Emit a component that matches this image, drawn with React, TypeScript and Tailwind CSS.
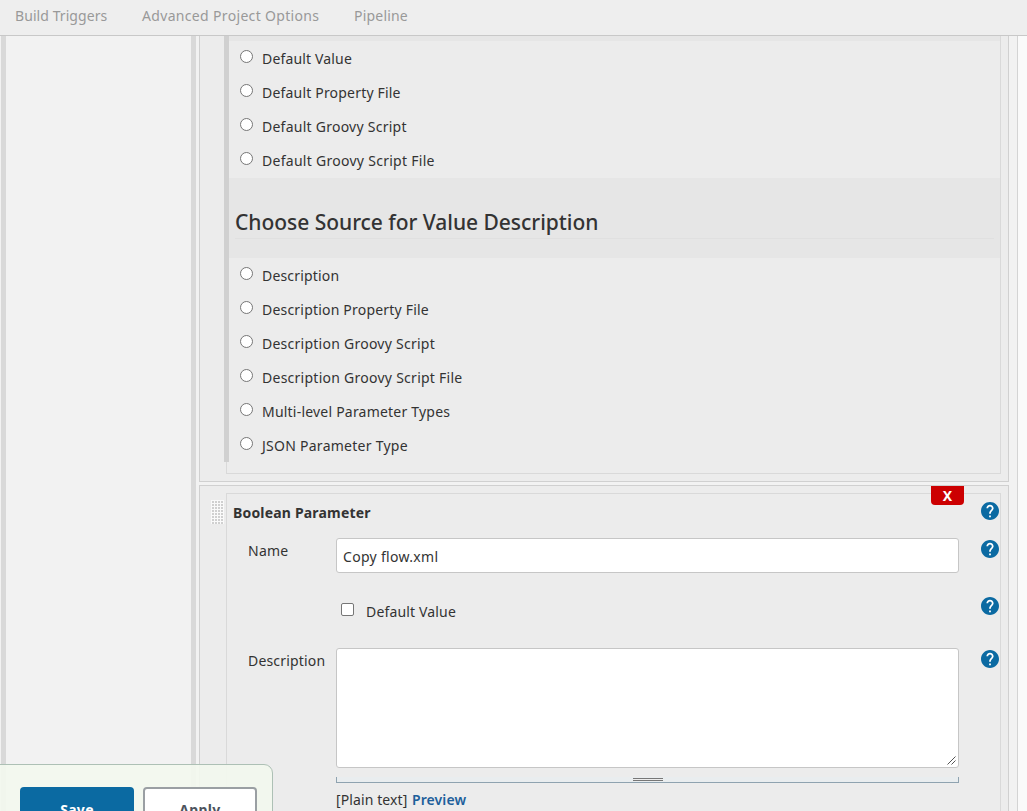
import React from "react";

const defaultSources = [
  { label: "Default Value", tracking: "tracking-[0.16px]" },
  { label: "Default Property File", tracking: "tracking-[0.19px]" },
  { label: "Default Groovy Script", tracking: "tracking-[0.25px]" },
  { label: "Default Groovy Script File", tracking: "tracking-[0.28px]" },
];

const descriptionSources = [
  { label: "Description", tracking: "tracking-[0.18px]" },
  { label: "Description Property File", tracking: "tracking-[0.2px]" },
  { label: "Description Groovy Script", tracking: "tracking-[0.25px]" },
  { label: "Description Groovy Script File", tracking: "tracking-[0.26px]" },
  { label: "Multi-level Parameter Types", tracking: "tracking-[0.21px]" },
  { label: "JSON Parameter Type", tracking: "tracking-[0.26px]" },
];

function RadioRow({ label, tracking }: { label: string; tracking: string }) {
  return (
    <label className="flex h-[34px] items-start pl-[11px]">
      <span className="mt-[9px] h-[13px] w-[13px] shrink-0 rounded-full border border-[#767676] bg-white" />
      <span className={"ml-[9px] mt-2 text-[14px] leading-5 " + tracking}>{label}</span>
    </label>
  );
}

function Help({ className }: { className: string }) {
  return (
    <svg viewBox="2 2 20 20" className={"h-[18px] w-[18px] shrink-0 " + className}>
      <circle cx="12" cy="12" r="9" fill="#fff" />
      <path
        fill="#0b6aa2"
        d="M12 2C6.48 2 2 6.48 2 12s4.48 10 10 10 10-4.48 10-10S17.52 2 12 2zm1 17h-2v-2h2v2zm2.07-7.75-.9.92C13.45 12.9 13 13.5 13 15h-2v-.5c0-1.1.45-2.1 1.17-2.83l1.24-1.26c.37-.36.59-.86.59-1.41 0-1.1-.9-2-2-2s-2 .9-2 2H8c0-2.21 1.79-4 4-4s4 1.79 4 4c0 .88-.36 1.68-.93 2.25z"
      />
    </svg>
  );
}

function DragHandle() {
  return (
    <svg className="ml-[11px] mt-[14px] h-[24px] w-[13px] shrink-0">
      <defs>
        <pattern id="grip" width="3" height="3" patternUnits="userSpaceOnUse">
          <rect width="3" height="3" fill="#fafafa" />
          <rect x="1" y="1" width="2" height="2" fill="#d0d0d0" />
        </pattern>
      </defs>
      <rect width="13" height="24" fill="url(#grip)" />
    </svg>
  );
}

export default function App() {
  return (
    <div className="relative flex h-[811px] w-[1027px] flex-col overflow-hidden bg-[#f2f2f2] font-['Noto_Sans','Segoe_UI',sans-serif] text-[14px] leading-5 text-[#333]">
      <nav className="flex h-[36px] shrink-0 border-b border-[#c8c8c8] bg-[#eeeeee] pl-[15px] pt-[6px] text-[#999]">
        <span className="w-[127px] tracking-[0.07px]">Build Triggers</span>
        <span className="w-[212px] tracking-[0.33px]">Advanced Project Options</span>
        <span className="tracking-[0.2px]">Pipeline</span>
      </nav>

      <div className="flex min-h-0 flex-1">
        <aside className="ml-px w-[195px] shrink-0 border-x-[5px] border-[#d9d9d9] bg-[#f2f2f2]" />

        <main className="ml-[3px] flex w-[810px] shrink-0 flex-col">
          <section className="h-[446px] shrink-0 border border-t-0 border-[#d0d0d0] bg-[#ececec] pl-[26px]">
            <div className="relative h-[438px] w-[775px] border border-t-0 border-[#d9d9d9] pl-[2px]">
              <div className="absolute -left-[3px] top-0 h-[426px] w-[5px] bg-[#d0d0d0]" />
              <div className="h-[5px] bg-[#e6e6e6]" />
              <div className="h-[137px]">
                {defaultSources.map((s) => (
                  <RadioRow key={s.label} {...s} />
                ))}
              </div>
              <div className="h-[80px] bg-[#e6e6e6] px-[6px]">
                <h2 className="h-[61px] border-b border-[#e0e0e0] pt-[30px] text-[21px] font-medium leading-[28px] tracking-[-0.03px]">
                  Choose Source for Value Description
                </h2>
              </div>
              {descriptionSources.map((s) => (
                <RadioRow key={s.label} {...s} />
              ))}
            </div>
          </section>

          <section className="relative mt-[3px] flex h-[340px] shrink-0 border border-[#d0d0d0] bg-[#ececec]">
            <DragHandle />
            <div className="ml-[2px] mt-[7px] w-[775px] border border-[#d9d9d9]">
              <div className="flex h-[38px] justify-between pl-[6px]">
                <h3 className="mt-[9px] text-[14px] font-bold leading-5 tracking-[0.18px]">Boolean Parameter</h3>
                <Help className="mr-[1px] mt-[8px]" />
              </div>
              <div className="flex h-[59px] pl-[21px]">
                <span className="mt-[9px] w-[88px] tracking-[0.25px]">Name</span>
                <div className="mt-[6px] h-[35px] w-[623px] rounded-[3px] border border-[#c6c6c6] bg-white pl-[6px] pt-[8px] tracking-[0.31px]">
                  Copy flow.xml
                </div>
                <Help className="ml-[22px] mt-[8px]" />
              </div>
              <div className="flex h-[54px] pl-[114px]">
                <span className="mt-[12px] h-[13px] w-[13px] rounded-[2px] border border-[#767676] bg-white" />
                <span className="ml-[12px] mt-[11px] w-[615px] tracking-[0.16px]">Default Value</span>
                <Help className="mt-[6px]" />
              </div>
              <div className="flex pl-[21px]">
                <span className="mt-[6px] w-[88px] tracking-[0.18px]">Description</span>
                <div className="w-[623px] pt-[3px]">
                  <div className="flex h-[120px] items-end justify-end rounded-[3px] border border-[#c6c6c6] bg-white">
                    <svg className="mb-[2px] mr-[2px] h-[9px] w-[9px]" viewBox="0 0 9 9">
                      <path d="M.5 8.5l8-8M4.5 8.5l4-4" stroke="#555" fill="none" />
                    </svg>
                  </div>
                  <div className="mt-[9px] flex h-[6px] justify-center border border-t-0 border-[#8fa3b0] bg-[#e9edef]">
                    <span className="mt-[1px] h-[3px] w-[30px] border-y border-[#777] bg-[#eee]" />
                  </div>
                  <div className="mt-[7px] flex">
                    <span className="w-[76px] tracking-[0.1px]">[Plain text]</span>
                    <a className="font-semibold tracking-[0.1px] text-[#1d609b]">Preview</a>
                  </div>
                </div>
                <Help className="ml-[22px] mt-[5px]" />
              </div>
            </div>
            <button className="absolute left-[731px] top-0 h-[19px] w-[33px] rounded-b-[4px] bg-[#cc0001] text-[14px] font-bold leading-[20px] text-white">
              X
            </button>
          </section>
        </main>

        <div className="ml-[8px] flex-1 border-l border-[#d4d4d4] bg-[#fafafa]" />
      </div>

      <div className="absolute left-[-1px] top-[764px] flex h-[60px] w-[274px] gap-[9px] rounded-tr-[9px] border border-[#adc0b5] bg-[#f3f8ee]/90 pl-[20px] pt-[22px] font-bold">
        <button className="h-[44px] w-[114px] rounded-[4px] bg-[#0b6aa2] pt-[2px] tracking-[0.3px] text-white">Save</button>
        <button className="h-[44px] w-[114px] rounded-[4px] border-2 border-[#9a9fa3] bg-white pt-[2px] tracking-[0.4px] text-[#4d545d]">Apply</button>
      </div>
    </div>
  );
}
